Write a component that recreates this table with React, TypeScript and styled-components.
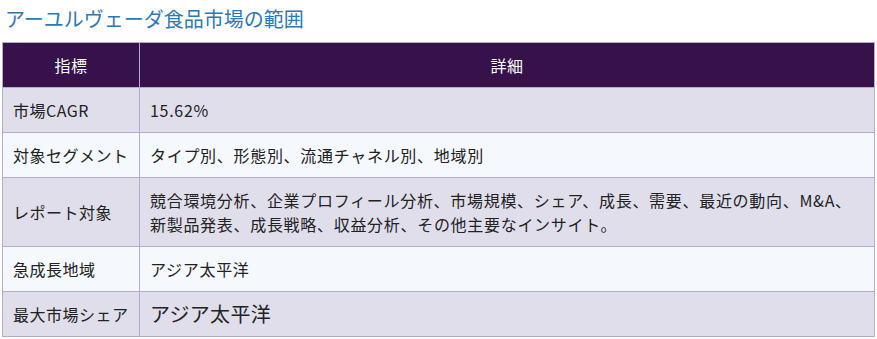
import React from "react";
import styled, { createGlobalStyle } from "styled-components";

const Global = createGlobalStyle`
  html, body { margin: 0; padding: 0; background: #ffffff; }
  body { font-family: "Noto Sans CJK JP", "Noto Sans", sans-serif; }
`;

const Page = styled.div`
  padding: 0 2px;
`;

const Title = styled.h2`
  margin: 0;
  padding: 6px 0 0 3px;
  height: 42px;
  box-sizing: border-box;
  font-size: 20px;
  line-height: 26px;
  font-weight: 400;
  color: #2b79b9;
`;

const Table = styled.table`
  width: 873px;
  border-collapse: collapse;
  table-layout: fixed;
  font-size: 16px;
  color: #222222;
`;

const HeadCell = styled.th<{ $narrow?: boolean }>`
  background: #371149;
  color: #ffffff;
  font-weight: 400;
  text-align: center;
  padding: 10px;
  line-height: 24px;
  border: 1px solid #b5abd0;
  letter-spacing: 0.5px;
  width: ${(p) => (p.$narrow ? "116px" : "auto")};
`;

const Row = styled.tr<{ $alt: boolean }>`
  background: ${(p) => (p.$alt ? "#f5f8fc" : "#e1deec")};
`;

const Cell = styled.td<{ $large?: boolean }>`
  padding: 10px;
  line-height: 24px;
  border: 1px solid #b5abd0;
  text-align: left;
  vertical-align: middle;
  font-size: ${(p) => (p.$large ? "20px" : "16px")};
  letter-spacing: ${(p) => (p.$large ? "0.3px" : "0.7px")};
`;

const LabelCell = styled(Cell)`
  white-space: nowrap;
  letter-spacing: 0.5px;
`;

const rows: { label: string; value: string; large?: boolean }[] = [
  { label: "市場CAGR", value: "15.62%" },
  { label: "対象セグメント", value: "タイプ別、形態別、流通チャネル別、地域別" },
  {
    label: "レポート対象",
    value:
      "競合環境分析、企業プロフィール分析、市場規模、シェア、成長、需要、最近の動向、M&A、新製品発表、成長戦略、収益分析、その他主要なインサイト。",
  },
  { label: "急成長地域", value: "アジア太平洋" },
  { label: "最大市場シェア", value: "アジア太平洋", large: true },
];

export default function App() {
  return (
    <Page>
      <Global />
      <Title>アーユルヴェーダ食品市場の範囲</Title>
      <Table>
        <thead>
          <tr>
            <HeadCell $narrow>指標</HeadCell>
            <HeadCell>詳細</HeadCell>
          </tr>
        </thead>
        <tbody>
          {rows.map((r, i) => (
            <Row key={r.label} $alt={i % 2 === 1}>
              <LabelCell>{r.label}</LabelCell>
              <Cell $large={r.large}>{r.value}</Cell>
            </Row>
          ))}
        </tbody>
      </Table>
    </Page>
  );
}
